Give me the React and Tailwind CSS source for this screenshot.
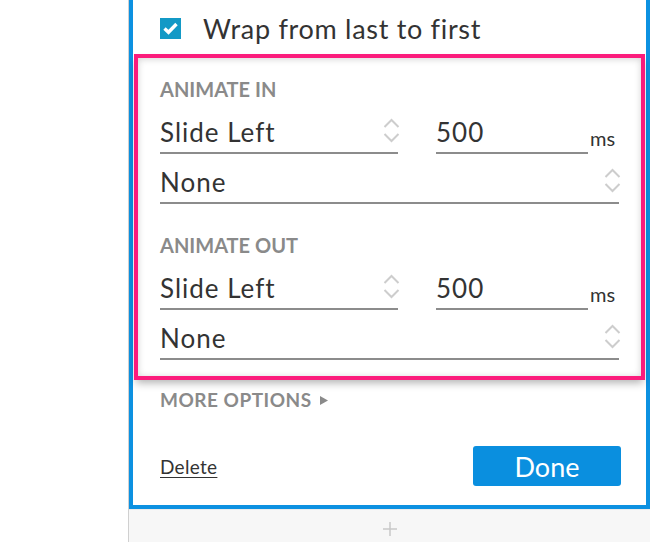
import React from 'react';

const Chevrons = ({ className = '' }) => (
  <svg width="17" height="25" viewBox="0 0 17 25" fill="none" stroke="#cdcdcd" strokeWidth="2" className={className}>
    <polyline points="1.5,9 8.5,2 15.5,9" />
    <polyline points="1.5,16 8.5,23 15.5,16" />
  </svg>
);

const SelectField = ({ value, className = '' }) => (
  <div className={`flex justify-between border-b-2 border-[#8c8c8c] pb-[5px] ${className}`}>
    <span className="text-[26px] leading-[30px] tracking-[1px] text-[#333]">{value}</span>
    <Chevrons className="-mr-[2px] mt-px shrink-0" />
  </div>
);

const AnimateSection = ({ title, className = '' }) => (
  <div className={className}>
    <div className="text-[20px] leading-[20px] font-bold text-[#8a8a8a]">{title}</div>
    <div className="mt-[18px] flex items-end">
      <SelectField value="Slide Left" className="w-[238px]" />
      <div className="ml-[38px] w-[152px] border-b-2 border-[#8c8c8c] pb-[5px] text-[26px] leading-[30px] tracking-[1px] text-[#333]">
        500
      </div>
      <span className="mb-[6px] ml-[2px] text-[20px] leading-none text-[#333]">ms</span>
    </div>
    <SelectField value="None" className="mt-[13px]" />
  </div>
);

const App = () => {
  return (
    <div className="w-[650px] h-[542px] flex bg-white overflow-hidden font-['Lato',sans-serif]">
      <div className="w-[128px] shrink-0" />
      <div className="flex-1 flex flex-col border-l border-[#d0d0d0]">
        <div className="border-x-4 border-b-4 border-[#0c91e1] bg-white">
          <div className="h-[54px] flex items-center pt-[2px] pl-[27px] gap-[22px]">
            <div className="w-[21px] h-[21px] bg-[#1399c6] flex items-center justify-center">
              <svg width="15" height="13" viewBox="0 0 15 13" fill="none" stroke="white" strokeWidth="3.4" strokeLinejoin="miter">
                <polyline points="1.5,6.5 5.5,10.3 13.5,2" />
              </svg>
            </div>
            <span className="text-[27px] leading-none tracking-[0.7px] text-[#333]">Wrap from last to first</span>
          </div>

          <div className="mx-px border-4 border-[#fb1c7c] px-[22px] pt-[21px] pb-[16px] shadow-[0_5px_8px_-2px_rgba(0,0,0,0.3),inset_0_1px_7px_rgba(0,0,0,0.18)]">
            <AnimateSection title="ANIMATE IN" />
            <AnimateSection title="ANIMATE OUT" className="mt-[31px]" />
          </div>

          <div className="mt-[10px] pl-[27px] flex items-center gap-[8px] text-[19px] leading-[20px] font-bold tracking-[0.5px] text-[#8a8a8a]">
            <span>MORE OPTIONS</span>
            <svg width="8" height="9" viewBox="0 0 8 9" fill="#8a8a8a">
              <polygon points="0,0 8,4.5 0,9" />
            </svg>
          </div>

          <div className="mt-[36px] pb-[19px] pl-[27px] pr-[25px] flex items-center justify-between">
            <span className="text-[19px] leading-none tracking-[0.3px] text-[#333] underline underline-offset-[3px]">Delete</span>
            <button className="w-[148px] h-[40px] rounded-[3px] bg-[#0a8fdf] text-white text-[27px] leading-none">Done</button>
          </div>
        </div>
        <div className="flex-1 bg-[#f7f7f7] border-t border-[#ebebeb] flex justify-center pt-[12px]">
          <svg width="14" height="14" viewBox="0 0 14 14" stroke="#c8c8c8" strokeWidth="1.5">
            <line x1="7" y1="0" x2="7" y2="14" />
            <line x1="0" y1="7" x2="14" y2="7" />
          </svg>
        </div>
      </div>
    </div>
  );
};

export default App;
